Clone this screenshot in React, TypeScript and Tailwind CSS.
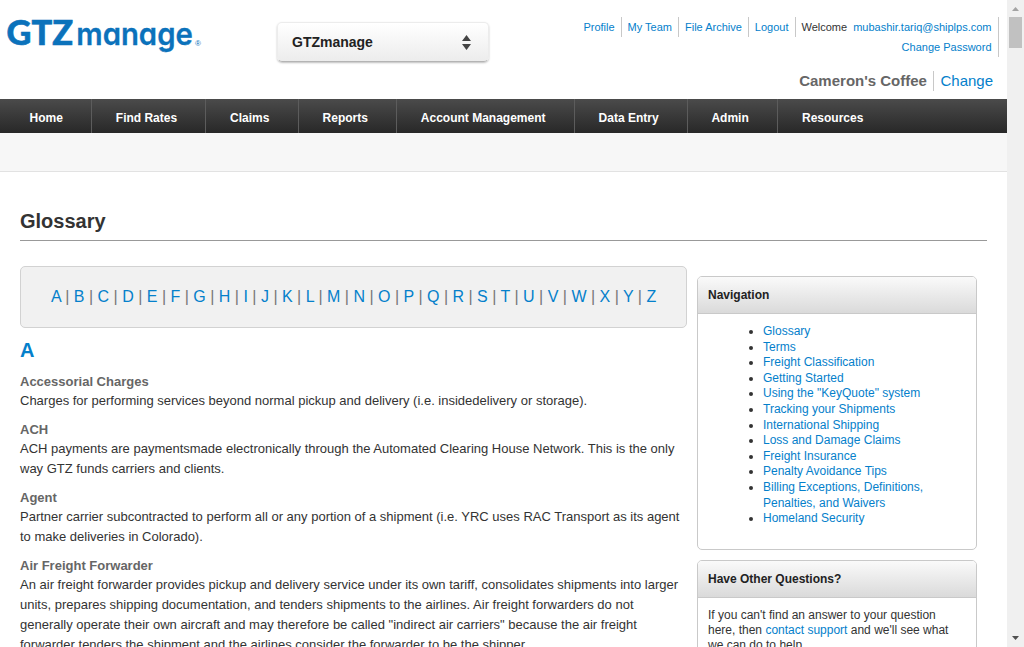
import type { ReactNode } from "react";

const LETTERS = "ABCDEFGHIJKLMNOPQRSTUVWXYZ".split("");

const MENU = [
  { label: "Home", box: "w-[92px] pl-[29.5px]" },
  { label: "Find Rates", box: "w-[114px] pl-[23.8px]" },
  { label: "Claims", box: "w-[93px] pl-6" },
  { label: "Reports", box: "w-[98px] pl-[23.6px]" },
  { label: "Account Management", box: "w-[178px] pl-[23.8px]" },
  { label: "Data Entry", box: "w-[113px] pl-[23.6px]" },
  { label: "Admin", box: "w-[90px] pl-[23.4px]" },
];

const TERMS = [
  {
    term: "Accessorial Charges",
    lines: ["Charges for performing services beyond normal pickup and delivery (i.e. insidedelivery or storage)."],
  },
  {
    term: "ACH",
    lines: [
      "ACH payments are paymentsmade electronically through the Automated Clearing House Network. This is the only",
      "way GTZ funds carriers and clients.",
    ],
  },
  {
    term: "Agent",
    lines: [
      "Partner carrier subcontracted to perform all or any portion of a shipment (i.e. YRC uses RAC Transport as its agent",
      "to make deliveries in Colorado).",
    ],
  },
  {
    term: "Air Freight Forwarder",
    lines: [
      "An air freight forwarder provides pickup and delivery service under its own tariff, consolidates shipments into larger",
      "units, prepares shipping documentation, and tenders shipments to the airlines. Air freight forwarders do not",
      "generally operate their own aircraft and may therefore be called \"indirect air carriers\" because the air freight",
      "forwarder tenders the shipment and the airlines consider the forwarder to be the shipper.",
    ],
  },
];

const LINKS = [
  "Glossary",
  "Terms",
  "Freight Classification",
  "Getting Started",
  'Using the "KeyQuote" system',
  "Tracking your Shipments",
  "International Shipping",
  "Loss and Damage Claims",
  "Freight Insurance",
  "Penalty Avoidance Tips",
  "Billing Exceptions, Definitions, Penalties, and Waivers",
  "Homeland Security",
];

function Panel({ title, className, children }: { title: string; className: string; children: ReactNode }) {
  return (
    <section className={`overflow-hidden rounded-[5px] border border-[#c9c9c9] ${className}`}>
      <h3 className="flex h-[37px] items-center border-b border-[#c9c9c9] bg-linear-to-b from-[#fafafa] to-[#dadada] pl-2.5 text-[12px] font-bold text-[#222]">
        {title}
      </h3>
      {children}
    </section>
  );
}

function Logo() {
  return (
    <svg width="200" height="50" viewBox="0 0 200 50" className="block" fill="#0b72bb">
      <text
        x="-0.5"
        y="35"
        fontSize="35"
        fontWeight="900"
        textLength="66.5"
        lengthAdjust="spacingAndGlyphs"
        stroke="#0b72bb"
        strokeWidth="0.6"
        className="font-[Lato,sans-serif]"
      >
        GTZ
      </text>
      <text
        x="69.3"
        y="35.4"
        fontSize="31"
        fontWeight="600"
        textLength="116.5"
        lengthAdjust="spacingAndGlyphs"
        stroke="#0b72bb"
        strokeWidth="0.3"
        className="font-[Inter,sans-serif] [font-feature-settings:'cv11']"
      >
        manage
      </text>
      <text x="188" y="35.5" fontSize="8" className="font-['Liberation_Sans',sans-serif]">
        ®
      </text>
    </svg>
  );
}

export default function App() {
  return (
    <div className="flex h-[647px] w-[1024px] overflow-hidden bg-white font-['Liberation_Sans',Arial,sans-serif] text-[#333]">
      <div className="flex h-full w-[1007px] flex-col overflow-hidden">
        <header className="flex h-[99px] shrink-0">
          <div className="w-[277px] pt-[10px] pl-[7px]">
            <Logo />
          </div>
          <div className="pt-[22px]">
            <button className="flex h-10 w-[212px] items-center justify-between rounded-[5px] border border-[#ececec] border-b-[#b4b4b4] bg-linear-to-b from-white to-[#ececec] pr-[17px] pl-[14px] text-[14px] font-bold text-[#222] shadow-[0_1px_2px_rgba(0,0,0,0.25)]">
              <span>GTZmanage</span>
              <svg width="9" height="15" viewBox="0 0 9 15" fill="#444">
                <path d="M4.5 0 9 6H0zM4.5 15 9 9H0z" />
              </svg>
            </button>
          </div>
          <div className="flex flex-1 flex-col items-end pt-[17px]">
            <div className="mr-2 flex text-[11px] leading-5 text-[#0480cb]">
              <a className="h-5 border-r border-[#c8c8c8] pr-1.5">Profile</a>
              <a className="h-5 border-r border-[#c8c8c8] px-1.5">My Team</a>
              <a className="h-5 border-r border-[#c8c8c8] px-1.5">File Archive</a>
              <a className="h-5 border-r border-[#c8c8c8] px-1.5">Logout</a>
              <div className="h-10 border-r border-[#c8c8c8] pr-[6.5px] pl-1.5 text-right">
                <div>
                  <span className="mr-1.5 text-[#333]">Welcome</span>
                  <a>mubashir.tariq@shiplps.com</a>
                </div>
                <a className="block">Change Password</a>
              </div>
            </div>
            <div className="mt-3.5 mr-3.5 flex text-[15px] leading-5">
              <strong className="border-r border-[#c8c8c8] pr-[6.5px] text-[#666]">Cameron's Coffee</strong>
              <a className="pl-1.5 text-[#0480cb]">Change</a>
            </div>
          </div>
        </header>

        <nav className="flex h-[34px] shrink-0 bg-linear-to-b from-[#4b4b4b] to-[#282828] text-[12px] leading-[38px] font-bold text-white">
          {MENU.map((m) => (
            <a key={m.label} className={`shrink-0 overflow-hidden border-r border-[#5c5c5c] whitespace-nowrap ${m.box}`}>
              {m.label}
            </a>
          ))}
          <a className="pl-6">Resources</a>
        </nav>
        <div className="h-[39px] shrink-0 border-b border-[#e2e2e2] bg-[#f7f7f7]" />

        <main className="px-5 pt-[33px]">
          <h1 className="h-9 border-b border-[#999] text-[20px] leading-[33px] font-bold">Glossary</h1>
          <div className="flex pt-[25px]">
            <div className="w-[667px] shrink-0">
              <div className="flex h-[62px] items-center rounded-[5px] border border-[#d2d2d2] bg-[#f1f1f1] pl-[30px] text-[16px] whitespace-pre text-[#0480cb]">
                <p>
                  {LETTERS.map((l, i) => (
                    <span key={l}>
                      {i > 0 && <span className="text-[#777]"> | </span>}
                      <a>{l}</a>
                    </span>
                  ))}
                </p>
              </div>
              <h2 className="mt-2.5 text-[20px] leading-6 font-bold text-[#0480cb]">A</h2>
              <dl className="mt-[9px] text-[13px] leading-5">
                {TERMS.map((t) => (
                  <div key={t.term} className="mb-2">
                    <dt className="-mb-px pt-px font-bold text-[#666]">{t.term}</dt>
                    <dd>
                      {t.lines.map((l) => (
                        <p key={l} className="whitespace-nowrap">{l}</p>
                      ))}
                    </dd>
                  </div>
                ))}
              </dl>
            </div>
            <aside className="ml-2.5 w-[280px] shrink-0 pt-2.5">
              <Panel title="Navigation" className="h-[274px]">
                <ul className="list-disc pt-[10px] pr-[30px] pl-[65px] text-[12px] leading-[15.6px]">
                  {LINKS.map((l) => (
                    <li key={l}>
                      <a className="text-[#0480cb]">{l}</a>
                    </li>
                  ))}
                </ul>
              </Panel>
              <Panel title="Have Other Questions?" className="mt-2.5 h-[150px]">
                <p className="px-2.5 pt-[9.5px] text-[12px] leading-[15.4px]">
                  If you can't find an answer to your question
                  <br />
                  here, then <a className="text-[#0480cb]">contact support</a> and we'll see what
                  <br />
                  we can do to help.
                </p>
              </Panel>
            </aside>
          </div>
        </main>
      </div>

      <div className="flex h-full w-[17px] shrink-0 flex-col items-center bg-[#f0f0f0]">
        <svg width="17" height="17" viewBox="0 0 17 17" fill="#a3a3a3">
          <path d="M8.5 7 12 11H5z" />
        </svg>
        <div className="h-[31px] w-[13px] bg-[#c1c1c1]" />
        <svg width="17" height="17" viewBox="0 0 17 17" fill="#505050" className="mt-auto">
          <path d="M8.5 10 12 6H5z" />
        </svg>
      </div>
    </div>
  );
}
